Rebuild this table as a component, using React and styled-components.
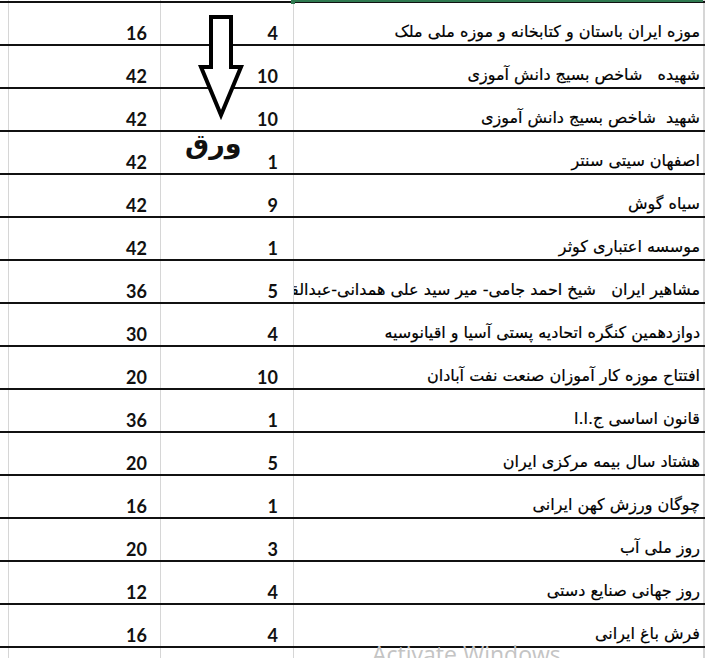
import React from 'react';
import styled, { createGlobalStyle } from 'styled-components';

const GlobalStyle = createGlobalStyle`
  html, body {
    margin: 0;
    padding: 0;
    background: #ffffff;
  }
`;

const rows = [
  { title: 'موزه ایران باستان و کتابخانه و موزه ملی ملک', sheet: 4, total: 16 },
  { title: 'شهیده   شاخص بسیج دانش آموزی', sheet: 10, total: 42 },
  { title: 'شهید  شاخص بسیج دانش آموزی', sheet: 10, total: 42 },
  { title: 'اصفهان سیتی سنتر', sheet: 1, total: 42 },
  { title: 'سیاه گوش', sheet: 9, total: 42 },
  { title: 'موسسه اعتباری کوثر', sheet: 1, total: 42 },
  { title: 'مشاهیر ایران   شیخ احمد جامی- میر سید علی همدانی-عبدالقادر مراغه ای', sheet: 5, total: 36 },
  { title: 'دوازدهمین کنگره اتحادیه پستی آسیا و اقیانوسیه', sheet: 4, total: 30 },
  { title: 'افتتاح موزه کار آموزان صنعت نفت آبادان', sheet: 10, total: 20 },
  { title: 'قانون اساسی ج.ا.ا', sheet: 1, total: 36 },
  { title: 'هشتاد سال بیمه مرکزی ایران', sheet: 5, total: 20 },
  { title: 'چوگان ورزش کهن ایرانی', sheet: 1, total: 16 },
  { title: 'روز ملی آب', sheet: 3, total: 20 },
  { title: 'روز جهانی صنایع دستی', sheet: 4, total: 12 },
  { title: 'فرش باغ ایرانی', sheet: 4, total: 16 },
];

const Sheet = styled.div`
  position: relative;
  width: 705px;
  height: 658px;
  overflow: hidden;
  background: #ffffff;
`;

const Row = styled.div`
  display: grid;
  grid-template-columns: 9px 152px 133px 410px 1fr;
  height: ${p => p.$height}px;
  box-sizing: border-box;
  border-bottom: ${p => (p.$ruled ? '2px solid #111' : 'none')};
`;

const Cell = styled.div`
  box-sizing: border-box;
  border-right: 1px solid #d6d6d6;
  display: flex;
  align-items: flex-end;
  justify-content: flex-end;
  overflow: hidden;
  white-space: pre;
  padding-bottom: 1px;
  padding-right: ${p => p.$pad || 0}px;
`;

const Num = styled.span`
  font-family: Lato, "Liberation Sans", sans-serif;
  font-weight: 700;
  font-size: 18px;
  line-height: 20px;
  color: #111;
`;

const Title = styled.span`
  direction: rtl;
  font-family: "DejaVu Sans", sans-serif;
  font-size: 16px;
  line-height: 22px;
  color: #000;
  -webkit-text-stroke: 0.2px #000;
`;

const Selection = styled.div`
  position: absolute;
  top: 0;
  left: 293px;
  width: 410px;
  height: 2px;
  background: #2f7a50;
  &::before {
    content: '';
    position: absolute;
    left: -2px;
    top: 0;
    width: 4px;
    height: 4px;
    background: #2f7a50;
  }
`;

const Arrow = styled.svg`
  position: absolute;
  left: 195px;
  top: 10px;
`;

const Label = styled.div`
  position: absolute;
  left: 185px;
  top: 124px;
  font-family: "DejaVu Sans", sans-serif;
  font-weight: 700;
  font-size: 27px;
  line-height: 40px;
  color: #111;
  direction: rtl;
`;

const Watermark = styled.div`
  position: absolute;
  left: 372px;
  top: 638px;
  font-family: "Open Sans", sans-serif;
  font-size: 23px;
  color: #c4c4c4;
  white-space: nowrap;
`;

const App = () => (
  <>
    <GlobalStyle />
    <Sheet>
      <Row $height={3} $ruled>
        <Cell /><Cell /><Cell /><Cell /><Cell />
      </Row>
      {rows.map((row, i) => (
        <Row key={i} $height={43} $ruled>
          <Cell />
          <Cell $pad={13}><Num>{row.total}</Num></Cell>
          <Cell $pad={15}><Num>{row.sheet}</Num></Cell>
          <Cell $pad={3}><Title>{row.title}</Title></Cell>
          <Cell />
        </Row>
      ))}
      <Row $height={20}>
        <Cell /><Cell /><Cell /><Cell /><Cell />
      </Row>
      <Selection />
      <Arrow width="52" height="112" viewBox="195 10 52 112">
        <path
          d="M211 17 H231 V67 H241 L221 115 L201 67 H211 Z"
          fill="#ffffff"
          stroke="#000"
          strokeWidth="4"
          strokeLinejoin="miter"
        />
      </Arrow>
      <Label>ورق</Label>
      <Watermark>Activate Windows</Watermark>
    </Sheet>
  </>
);

export default App;
